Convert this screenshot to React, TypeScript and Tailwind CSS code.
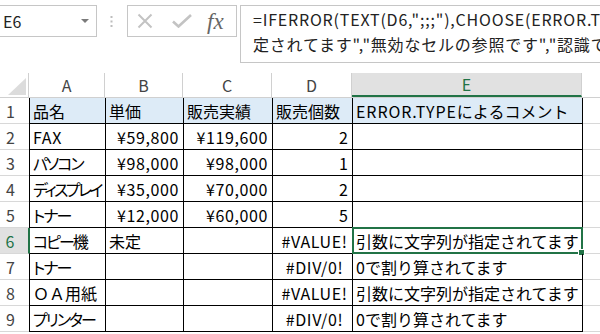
import React from "react";

type Align = "l" | "r" | "c";
type Cell = { t?: string; a?: Align; wide?: boolean; kana?: boolean };

// widths include the cell's own right border (A also carries the left one)
const COLS = [77, 78, 89, 80, 230];
const LETTERS = ["A", "B", "C", "D", "E"];

const ROWS: Cell[][] = [
  [{ t: "品名" }, { t: "単価" }, { t: "販売実績" }, { t: "販売個数" }, { t: "ERROR.TYPEによるコメント" }],
  [{ t: "FAX", wide: true }, { t: "¥59,800", a: "r", wide: true }, { t: "¥119,600", a: "r", wide: true }, { t: "2", a: "r" }, {}],
  [{ t: "パソコン", kana: true }, { t: "¥98,000", a: "r", wide: true }, { t: "¥98,000", a: "r", wide: true }, { t: "1", a: "r" }, {}],
  [{ t: "ディスプレイ", kana: true }, { t: "¥35,000", a: "r", wide: true }, { t: "¥70,000", a: "r", wide: true }, { t: "2", a: "r" }, {}],
  [{ t: "トナー", kana: true }, { t: "¥12,000", a: "r", wide: true }, { t: "¥60,000", a: "r", wide: true }, { t: "5", a: "r" }, {}],
  [{ t: "コピー機", kana: true }, { t: "未定" }, {}, { t: "#VALUE!", a: "c", wide: true }, { t: "引数に文字列が指定されてます" }],
  [{ t: "トナー", kana: true }, {}, {}, { t: "#DIV/0!", a: "c", wide: true }, { t: "0で割り算されてます" }],
  [{ t: "ＯＡ用紙" }, {}, {}, { t: "#VALUE!", a: "c", wide: true }, { t: "引数に文字列が指定されてます" }],
  [{ t: "プリンター", kana: true }, {}, {}, { t: "#DIV/0!", a: "c", wide: true }, { t: "0で割り算されてます" }],
];

const alignClass: Record<Align, string> = {
  l: "justify-start pl-[3px]",
  r: "justify-end pr-[4px]",
  c: "justify-center pl-[4px]",
};

function FormulaBar() {
  return (
    <div className="flex h-[73px] items-start">
      <div className="mt-[5px] flex h-[32px] w-[97px] items-center justify-between border border-l-0 border-[#c6c6c6] pl-[3px] pr-[7px] text-[16px] text-[#222]">
        <span>E6</span>
        <svg width="8" height="4" viewBox="0 0 8 4">
          <path d="M0 0h8L4 4z" fill="#7a7a7a" />
        </svg>
      </div>
      <svg className="ml-[13px] mt-[16px]" width="3" height="11" viewBox="0 0 3 11">
        <rect x="0.5" y="0" width="2" height="2" fill="#bdbdbd" />
        <rect x="0.5" y="4.5" width="2" height="2" fill="#bdbdbd" />
        <rect x="0.5" y="9" width="2" height="2" fill="#bdbdbd" />
      </svg>
      <div className="ml-[14px] mt-[5px] flex h-[32px] w-[110px] items-center border border-[#c6c6c6]">
        <svg className="ml-[9px]" width="16" height="16" viewBox="0 0 16 16">
          <path d="M1.5 1.5l13 13M14.5 1.5l-13 13" stroke="#c3c3c3" strokeWidth="2" fill="none" />
        </svg>
        <svg className="ml-[19px]" width="20" height="14" viewBox="0 0 20 14">
          <path d="M1 7.5l5.5 5L19 1" stroke="#c3c3c3" strokeWidth="2.6" fill="none" />
        </svg>
        <span className="ml-[15px] font-['Liberation_Serif',serif] text-[23px] italic leading-none text-[#666]">
          fx
        </span>
      </div>
      <div className="ml-[3px] mt-[5px] h-[58px] flex-1 overflow-hidden whitespace-nowrap border border-r-0 border-[#c6c6c6] pl-[12px] pt-[1px] text-[16px] leading-[25px] tracking-[0.8px] text-[#222]">
        <div>=IFERROR(TEXT(D6,";;;"),CHOOSE(ERROR.TYPE(D6),"","0で割り算されてます","引数に文字列が指</div>
        <div>定されてます","無効なセルの参照です","認識できない名前です","数値が不正です"),"")</div>
      </div>
    </div>
  );
}

function HeaderRow() {
  return (
    <div className="flex h-[25px] border-b border-[#d0d0d0] text-[16px] text-[#444]">
      <div className="relative w-[29px] shrink-0 border-r border-[#d0d0d0]">
        <svg className="absolute left-[8px] top-[5px]" width="18" height="17" viewBox="0 0 18 17">
          <path d="M18 0v17H0z" fill="#dcdcdc" />
        </svg>
      </div>
      {LETTERS.map((l, i) => {
        const sel = l === "E";
        return (
          <div
            key={l}
            style={{ width: i === 0 ? COLS[i] - 1 : COLS[i] }}
            className={`flex shrink-0 items-center justify-center border-r border-[#d0d0d0] ${
              sel ? "border-b-2 border-b-[#217346] bg-[#e1e1e1] text-[#217346]" : ""
            }`}
          >
            {l}
          </div>
        );
      })}
      <div className="flex-1" />
    </div>
  );
}

function CellText({ c }: { c: Cell }) {
  if (!c.t) return null;
  if (c.t.startsWith("ERROR.TYPE")) {
    return (
      <span>
        <span className="tracking-[0.9px]">ERROR.TYPE</span>
        {c.t.slice(10)}
      </span>
    );
  }
  if (c.kana) {
    // the sheet's font sets katakana proportionally
    const tight = c.t.length > 5 ? "tracking-[-2.6px]" : "tracking-[-2px]";
    return <span className={`${tight} [font-feature-settings:'palt']`}>{c.t}</span>;
  }
  return <span className={c.wide ? "tracking-[0.6px]" : ""}>{c.t}</span>;
}

export default function App() {
  return (
    <div className="h-[334px] w-[600px] overflow-hidden bg-white font-['Noto_Sans_CJK_JP',sans-serif] text-black">
      <FormulaBar />
      <HeaderRow />
      {ROWS.map((row, r) => {
        const n = r + 1;
        const selRow = n === 6;
        return (
          <div key={n} className="flex h-[26px]">
            <div
              className={`flex w-[29px] shrink-0 items-center justify-center border-b border-[#d8d8d8] pr-[8px] text-[16px] ${
                selRow ? "border-r border-r-[#217346] bg-[#e1e1e1] text-[#217346]" : "text-[#444]"
              }`}
            >
              {n}
            </div>
            {row.map((c, i) => {
              const isSel = selRow && i === 4;
              return (
                <div
                  key={i}
                  style={{ width: COLS[i] }}
                  className={`relative flex shrink-0 items-center whitespace-nowrap border-b border-r border-black text-[16px] ${
                    i === 0 ? (selRow ? "border-l border-l-[#217346]" : "border-l") : ""
                  } ${n === 1 ? "bg-[#ddebf7]" : ""} ${alignClass[c.a ?? "l"]}`}
                >
                  <CellText c={c} />
                  {isSel && (
                    <div className="absolute -bottom-px -left-px -right-px -top-px border-2 border-[#217346]">
                      <div className="absolute -bottom-[4px] -right-[4px] h-[7px] w-[7px] border border-white bg-[#217346]" />
                    </div>
                  )}
                </div>
              );
            })}
            <div className="flex-1 border-b border-[#d8d8d8]" />
          </div>
        );
      })}
    </div>
  );
}
